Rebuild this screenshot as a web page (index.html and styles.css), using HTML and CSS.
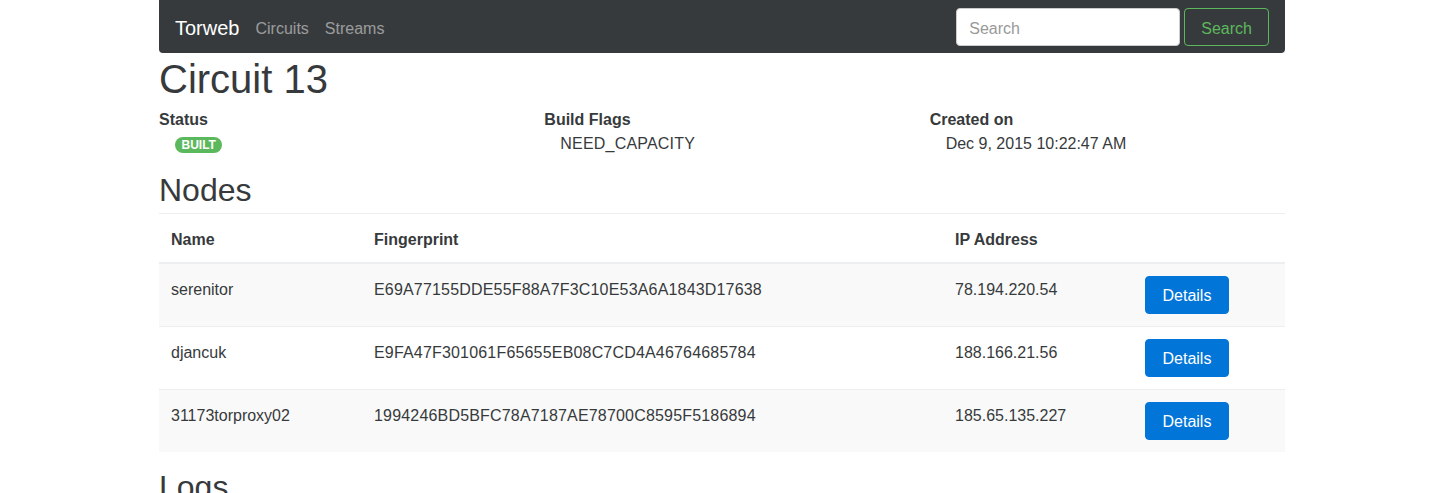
FILE: index.html
```html
<!DOCTYPE html>
<html lang="en">
<head>
<meta charset="utf-8">
<title>Torweb - Circuit 13</title>
<link rel="stylesheet" href="styles.css">
</head>
<body>
<div class="container">
  <nav class="navbar">
    <a class="brand" href="#">Torweb</a>
    <ul class="nav">
      <li><a class="nav-link" href="#">Circuits</a></li>
      <li><a class="nav-link" href="#">Streams</a></li>
    </ul>
    <form class="search">
      <input class="search-input" type="text" placeholder="Search">
      <button class="btn btn-outline-success" type="button">Search</button>
    </form>
  </nav>

  <h1 class="title">Circuit 13</h1>

  <div class="info">
    <dl class="info-item">
      <dt>Status</dt>
      <dd><span class="badge">BUILT</span></dd>
    </dl>
    <dl class="info-item">
      <dt>Build Flags</dt>
      <dd class="caps">NEED_CAPACITY</dd>
    </dl>
    <dl class="info-item">
      <dt>Created on</dt>
      <dd>Dec 9, 2015 10:22:47 AM</dd>
    </dl>
  </div>

  <h2 class="section">Nodes</h2>
  <table class="table">
    <thead>
      <tr>
        <th class="c-name">Name</th>
        <th class="c-fp">Fingerprint</th>
        <th class="c-ip">IP Address</th>
        <th class="c-act"></th>
      </tr>
    </thead>
    <tbody>
      <tr class="odd">
        <td>serenitor</td>
        <td class="fp">E69A77155DDE55F88A7F3C10E53A6A1843D17638</td>
        <td>78.194.220.54</td>
        <td class="act"><a class="btn btn-primary" href="#">Details</a></td>
      </tr>
      <tr>
        <td>djancuk</td>
        <td class="fp">E9FA47F301061F65655EB08C7CD4A46764685784</td>
        <td>188.166.21.56</td>
        <td class="act"><a class="btn btn-primary" href="#">Details</a></td>
      </tr>
      <tr class="odd">
        <td>31173torproxy02</td>
        <td class="fp">1994246BD5BFC78A7187AE78700C8595F5186894</td>
        <td>185.65.135.227</td>
        <td class="act"><a class="btn btn-primary" href="#">Details</a></td>
      </tr>
    </tbody>
  </table>

  <h2 class="section">Logs</h2>
</div>
</body>
</html>
```

FILE: styles.css
```css
* {
  box-sizing: border-box;
}

html, body {
  margin: 0;
  padding: 0;
}

body {
  font-family: "Liberation Sans", Arial, sans-serif;
  font-size: 16px;
  line-height: 1.5;
  color: #373a3c;
  background: #fff;
}

.container {
  width: 1126px;
  margin: 0 auto;
}

/* Navbar */
.navbar {
  display: flex;
  align-items: flex-start;
  height: 53px;
  padding: 8px 16px;
  background: #373a3c;
  border-radius: 0 0 4px 4px;
}

.brand {
  font-size: 20px;
  line-height: 24px;
  color: #fff;
  text-decoration: none;
  margin-top: 8px;
  margin-right: 16px;
}

.nav {
  display: flex;
  gap: 16px;
  list-style: none;
  margin: 8px 0 0;
  padding: 0;
}

.nav-link {
  display: block;
  color: rgba(255, 255, 255, 0.5);
  text-decoration: none;
  line-height: 24px;
  padding-top: 1px;
}

.search {
  margin-left: auto;
  display: flex;
  gap: 4px;
}

.search-input {
  width: 224px;
  height: 38px;
  padding: 8px 12px 4px;
  font-family: inherit;
  font-size: 16px;
  line-height: 24px;
  color: #55595c;
  background: #fff;
  border: 1px solid #ccc;
  border-radius: 4px;
}

.search-input::placeholder {
  color: #999;
}

.btn {
  display: inline-block;
  height: 38px;
  padding: 7px 16px 5px;
  font-family: inherit;
  font-size: 16px;
  line-height: 24px;
  border: 1px solid transparent;
  border-radius: 4px;
  text-decoration: none;
  text-align: center;
}

.btn-outline-success {
  padding-top: 8px;
  padding-bottom: 4px;
  color: #5cb85c;
  background: transparent;
  border-color: #5cb85c;
}

.btn-primary {
  padding-left: 16.5px;
  padding-right: 16.5px;
  color: #fff;
  background: #0275d8;
  border-color: #0275d8;
}

/* Headings */
.title {
  font-size: 40px;
  font-weight: 500;
  line-height: 44px;
  margin: 4px 0 6.5px;
}

.section {
  font-size: 32px;
  font-weight: 500;
  line-height: 35.2px;
  margin: 0 0 4.8px;
}

/* Info columns */
.info {
  display: grid;
  grid-template-columns: repeat(3, 1fr);
  column-gap: 30px;
}

.info-item {
  margin: 0 0 17.5px;
}

.info-item dt {
  font-weight: bold;
}

.info-item dd {
  margin: 0;
  padding-left: 16px;
}

.caps {
  letter-spacing: 0.2px;
}

.badge {
  display: inline-block;
  padding: 0 6.5px;
  font-size: 12px;
  font-weight: bold;
  line-height: 16px;
  color: #fff;
  background: #5cb85c;
  border-radius: 10px;
}

/* Table */
.table {
  width: 100%;
  border-collapse: collapse;
  margin-bottom: 18px;
}

.table th,
.table td {
  padding: 14px 12px 10px;
  text-align: left;
  vertical-align: top;
  border-top: 1px solid #eceeef;
}

.table thead th {
  padding-top: 13.5px;
  padding-bottom: 10.5px;
  border-bottom: 2px solid #eceeef;
  vertical-align: bottom;
}

.table td.act {
  padding-top: 12px;
  padding-bottom: 12px;
}

.table tbody tr:first-child td {
  border-top: 0;
}

.table tbody tr.odd {
  background: #f9f9f9;
}

.fp {
  letter-spacing: 0.18px;
}

.c-name { width: 203px; }
.c-fp { width: 581px; }
.c-ip { width: 190px; }
.c-act { width: 152px; }
```
